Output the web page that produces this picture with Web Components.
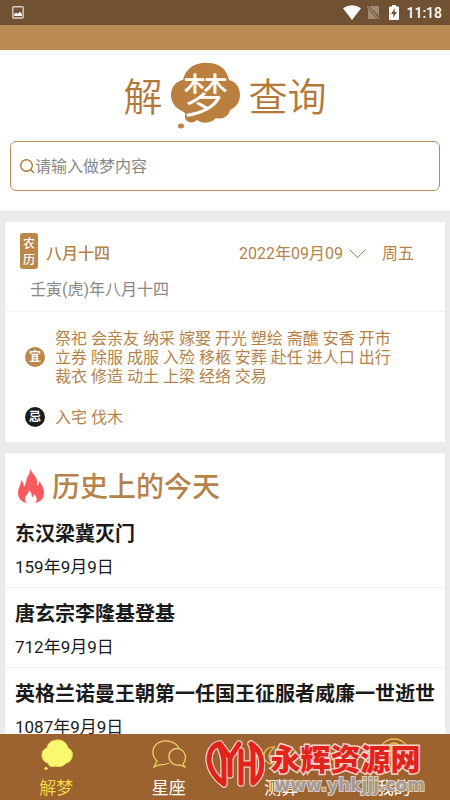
<!DOCTYPE html>
<html lang="zh-CN">
<head>
<meta charset="utf-8">
<meta name="viewport" content="width=device-width, initial-scale=1">
<title>解梦查询</title>
<style>
html,body{margin:0;height:100%}
body{font-family:Roboto,"Noto Sans CJK SC",sans-serif;font-size:16px;color:#1a1a1a;background:#ebebed;--brown:#b5834a}
</style>
</head>
<body>
<dream-app></dream-app>
<script>
function define(name, html, setup){
  const t=document.createElement('template');
  t.innerHTML=html;
  customElements.define(name, class extends HTMLElement{
    constructor(){
      super();
      this.attachShadow({mode:'open'}).append(t.content.cloneNode(true));
    }
    connectedCallback(){ if(setup) setup(this,this.shadowRoot); }
  });
}

define('status-bar', `
<style>
:host{display:flex;align-items:center;justify-content:space-between;height:25px;padding:0 8px 0 12px;background:#705233;color:#fff}
div{display:flex;align-items:center}
svg{display:block}
.wifi{margin-right:6px}.sim{margin-right:9px}.bat{margin-right:7px}
span{font-size:14px;line-height:24px;padding-top:1px;font-weight:500}
</style>
<svg width="12" height="13" viewBox="0 0 12 13"><rect x=".8" y=".8" width="10.4" height="11.2" rx="1" fill="none" stroke="#d9cfc5" stroke-width="1.4"/><path d="M2 10V8.5l2-2 1.5 1.2L8 5.8l2 2.4V10z" fill="#fff"/></svg>
<div>
<svg class="wifi" width="18" height="15" viewBox="0 0 18 15"><path d="M0 3.3Q9-3 18 3.3L9 15z" fill="#fff"/></svg>
<svg class="sim" width="13" height="15" viewBox="0 0 13 15"><path d="M4 1h8v10L3 2zM1 4l9 10H1z" fill="#a08b76"/><path d="M0 1l12 13" stroke="#a08b76" stroke-width="1.3"/></svg>
<svg class="bat" width="10" height="15" viewBox="0 0 10 15"><path d="M3 0h4v1.5h2q1 0 1 1V14q0 1-1 1H1q-1 0-1-1V2.500q0-1 1-1h2z" fill="#fff"/><path d="M6 3L2 9h2.500L4 13l4-6H5.500z" fill="#705233"/></svg>
<span>11:18</span>
</div>`);

define('dream-logo', `
<style>
:host{display:flex;justify-content:center;align-items:center;height:70px;color:#b47839}
h1{display:flex;align-items:center;margin:0;font-size:39px;line-height:60px;font-weight:350}
h1>span:not(.cloud){padding-top:4px}
.cloud{display:grid;place-items:center;width:70px;height:68px;margin:0 8px}
.cloud>*{grid-area:1/1}
.cloud span{color:#fff;font-size:46px;line-height:68px;font-weight:350}
</style>
<h1><span>解</span><span class="cloud">
<svg width="70" height="68" viewBox="0 0 70 68" aria-hidden="true"><path d="M12 18C15 4 28 0 37 1C49 1 56 8 58 18C66 20 69 27 69 33C69 41 64 46 59 48C58 54 52 58 45 56C39 62 31 62 26 58C21 63 13 60 14 53C15 51 13 50 11 49C4 46 0 40 0 33C0 25 5 19 12 18Z" fill="#bb8040"/><ellipse cx="10" cy="64" rx="3" ry="2.500" fill="#bb8040"/></svg>
<span>梦</span></span><span>查询</span></h1>`);

define('search-box', `
<style>
:host{display:block}
label{display:flex;align-items:center;height:48px;padding:0 9px;border:1px solid #b98c5a;border-radius:6px;background:#fff}
svg{flex:none}
input{flex:1;min-width:0;border:0;outline:0;padding:2px 0 0;background:none;font:inherit;font-size:16px;line-height:24px;color:#333}
input::placeholder{color:#888;opacity:1}
</style>
<label><svg width="15" height="16" viewBox="0 0 15 16" fill="none" stroke="#b47839" stroke-width="1.400" aria-hidden="true"><circle cx="6.500" cy="7.500" r="5.800"/><path d="M10.500 11.500L14 15"/></svg>
<input type="search" placeholder="请输入做梦内容" aria-label="请输入做梦内容"></label>`);

define('almanac-row', `
<style>
:host{display:grid;grid-template-columns:20px 1fr;column-gap:10px;align-items:center;--dot:#b98747}
:host([kind=bad]){--dot:#1c1c1c}
b{display:block;width:20px;height:20px;border-radius:50%;background:var(--dot);color:#fff;font-size:12px;line-height:20px;text-align:center;font-weight:700}
p{margin:0;padding-top:2px;line-height:19px;color:var(--brown)}
</style>
<b></b><p><slot></slot></p>`, (el,r)=>{ r.querySelector('b').textContent=el.getAttribute('mark'); });

define('almanac-card', `
<style>
:host{display:block;background:#fff}
header{padding:11px 15px 10px;border-bottom:1px solid #f2f2f2}
.top{display:flex;align-items:flex-end;color:var(--brown);line-height:30px}
.tag{width:18px;padding:3px 3px 1px;margin-right:8px;border-radius:3px;background:#b98747;color:#fff;font-size:12px;line-height:16px;font-weight:500;text-align:center;box-sizing:border-box;overflow-wrap:anywhere}
strong{font-weight:500}
button{display:flex;align-items:center;gap:6px;margin-left:auto;padding:0;border:0;background:none;color:inherit;font:inherit;line-height:30px}
.day{margin:0 16px}
.year{margin:10px 10px 0;line-height:22px;color:#888}
section{display:grid;gap:20px;padding:15px 45px 15px 20px}
</style>
<header><div class="top"><span class="tag">农历</span><strong>八月十四</strong>
<button type="button">2022年09月09<svg width="17" height="10" viewBox="0 0 17 10" fill="none" stroke="#b5834a" stroke-width="1" aria-hidden="true"><path d="M.5 .5l8 8 8-8"/></svg></button><span class="day">周五</span></div>
<div class="year">壬寅(虎)年八月十四</div></header>
<section>
<almanac-row mark="宜">祭祀 会亲友 纳采 嫁娶 开光 塑绘 斋醮 安香 开市 立券 除服 成服 入殓 移柩 安葬 赴任 进人口 出行 裁衣 修造 动土 上梁 经络 交易</almanac-row>
<almanac-row kind="bad" mark="忌">入宅 伐木</almanac-row>
</section>`);

define('history-item', `
<style>
:host{display:block;padding:11px 10px 5px;border-bottom:1px solid #f2f2f2}
h3{margin:0 0 3px;font-size:20px;line-height:30px;font-weight:700;white-space:nowrap}
time{display:block;font-size:17px;line-height:30px}
</style>
<h3><slot></slot></h3><time></time>`, (el,r)=>{ r.querySelector('time').textContent=el.getAttribute('date'); });

define('history-card', `
<style>
:host{display:block;background:#fff}
h2{display:flex;align-items:center;gap:7px;margin:0;padding:15px 12px 0;font-size:28px;line-height:38px;font-weight:500;color:var(--brown)}
svg{margin-bottom:4px}
</style>
<h2><svg width="28" height="36" viewBox="0 0 28 36" aria-hidden="true"><path fill="#fb5a5c" d="M13 0C14 4 18 7 20 12C20 14 20 16 20 18C22 17 22 15 22 13C25 16 27 21 27 25C27 31 23 34 18 35C21 32 20 29 17 26C17 28 16 29 15 29C15 26 14 24 12 22C12 26 8 27 8 31C8 33 9 34 10 35C4 34 1 30 1 25C1 20 4 17 4 12C6 14 7 16 7 19C9 16 9 13 10 10C11 7 14 5 13 0Z"/></svg>历史上的今天</h2>
<history-item date="159年9月9日">东汉梁冀灭门</history-item>
<history-item date="712年9月9日">唐玄宗李隆基登基</history-item>
<history-item date="1087年9月9日">英格兰诺曼王朝第一任国王征服者威廉一世逝世</history-item>`);

define('tab-link', `
<style>
:host{display:block;flex:1;color:#fff}
:host([active]){color:#f3d744}
a{display:flex;flex-direction:column;align-items:center;padding-top:4px;color:inherit;text-decoration:none;font-size:17px;line-height:26px}
::slotted(svg){display:block;width:36px;height:34px;margin-bottom:3px}
</style>
<a href="#"><slot name="icon"></slot><slot></slot></a>`);

define('site-mark', `
<style>
:host{display:flex;align-items:flex-start;pointer-events:none}
.words{display:flex;flex-direction:column;margin:5px 0 0 6px}
b{font-size:30px;line-height:32px;font-weight:900;color:#e2231a;-webkit-text-stroke:3px #f3d3ca;paint-order:stroke fill}
i{font:bold 17px/18px "DejaVu Sans",sans-serif;color:#a39a94;-webkit-text-stroke:2px #dccbbd;paint-order:stroke fill;margin-left:4px}
</style>
<svg width="60" height="50" viewBox="0 0 60 50" fill="none" stroke-linecap="round" stroke-linejoin="round" aria-hidden="true">
<g stroke="#f3cfc6" stroke-width="7.500"><path d="M14 5C1 9 -1 30 19 45V24C19 16 16 11 14 5M15 5L25 19L34 5M25 19V36M36 44V12M36 25H47M46 5C49 10 48 16 48 22V44C60 35 60 13 46 5"/></g>
<path stroke="#e2231a" stroke-width="5" d="M14 5C1 9 -1 30 19 45V24C19 16 16 11 14 5M15 5L25 19L34 5M25 19V36M36 44V12M36 25H47M46 5C49 10 48 16 48 22V44C60 35 60 13 46 5"/></svg>
<div class="words"><b>永辉资源网</b><i>www.yhkjjj.com</i></div>`);

define('tab-bar', `
<style>
:host{display:block;position:relative;background:#9c6230;height:66px}
nav{display:flex}
site-mark{position:absolute;right:25px;top:5px}
</style>
<nav>
<tab-link active><svg slot="icon" viewBox="0 0 36 34" fill="#f9f871" stroke="#f0dc55"><path d="M9 10C10 4 15 2 20 2C26 2 29 6 30 10C34 12 35 15 34 19C33 23 30 25 28 25C25 29 21 29 17 28C14 29 11 29 10 25C6 24 4 21 4 17C4 13 6 11 9 10Z"/><ellipse cx="8" cy="30.500" rx="1.500" ry="1"/></svg>解梦</tab-link>
<tab-link><svg slot="icon" viewBox="0 0 36 34" fill="none" stroke="#efcf67" stroke-width="1.300"><path d="M18 25C14 27 11 27 8 27L3 29L6 23C0 17 1 9 7 5C14 1 24 3 28 10"/><path d="M32 26C36 21 35 14 29 11C22 9 17 14 18 20C19 25 24 28 29 27L34 29Z"/></svg>星座</tab-link>
<tab-link><svg slot="icon" viewBox="0 0 36 34" fill="none" stroke="#e7c34e" stroke-width="1.300"><path d="M12 9C5 8 1 13 1 18C1 23 5 26 10 26C8 24 6 22 6 18H15M6 18C7 14 9 11 12 9M21 9C29 9 34 13 34 18C34 23 30 26 24 26"/></svg>测算</tab-link>
<tab-link><svg slot="icon" viewBox="0 0 36 34" fill="none" stroke="#e7c34e" stroke-width="1.300"><circle cx="18" cy="16" r="15"/><circle cx="18" cy="11" r="6"/><path d="M8 27C8 20 12 18 18 18S28 20 28 27"/></svg>我的</tab-link>
</nav>
<site-mark></site-mark>`);

define('dream-app', `
<style>
:host{display:flex;flex-direction:column;height:100vh}
.band{height:25px;flex:none;background:#ba8b53}
main{flex:1;min-height:0;overflow:auto;scrollbar-width:none}
.head{background:#fff;padding:11px 10px 20px;margin-bottom:11px}
search-box{margin-top:10px}
almanac-card,history-card{margin:0 5px 11px}
status-bar,tab-bar{flex:none}
</style>
<status-bar></status-bar><div class="band"></div>
<main><div class="head"><dream-logo></dream-logo><search-box></search-box></div>
<almanac-card></almanac-card><history-card></history-card></main>
<tab-bar></tab-bar>`);
</script>
</body>
</html>
